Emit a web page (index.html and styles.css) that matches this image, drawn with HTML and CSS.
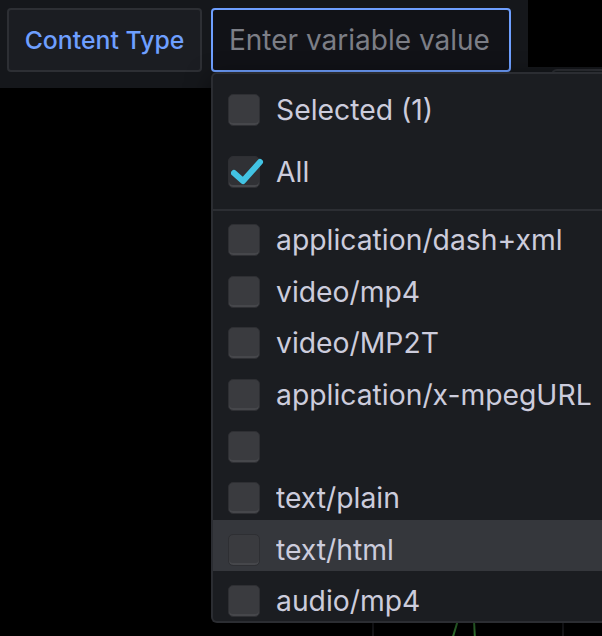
FILE: index.html
```html
<!DOCTYPE html>
<html lang="en">
<head>
  <meta charset="UTF-8">
  <title>Content Type variable</title>
  <link rel="stylesheet" href="styles.css">
</head>
<body>
  <!-- variable bar -->
  <div class="top">
    <div class="controls">
      <label class="var-label" for="var-input">Content Type</label>
      <input class="var-input" id="var-input" type="text" placeholder="Enter variable value">
    </div>
    <div class="aside">
      <div class="aside-black"></div>
      <div class="aside-panel"></div>
    </div>
  </div>

  <!-- panel behind the menu -->
  <div class="chart">
    <svg width="602" height="548" viewBox="0 0 602 548">
      <line x1="373" y1="0" x2="373" y2="548" stroke="#1c1d21" stroke-width="2"/>
      <line x1="563" y1="0" x2="563" y2="548" stroke="#1c1d21" stroke-width="2"/>
      <path d="M452 552 L458 532" stroke="#3b8a3a" stroke-width="2" fill="none"/>
      <path d="M474 532 L475 552" stroke="#3b8a3a" stroke-width="2" fill="none"/>
    </svg>
  </div>

  <!-- options menu -->
  <div class="dropdown">
    <div class="dd-head">
      <div class="opt">
        <span class="box"></span>
        <span class="opt-text">Selected (1)</span>
      </div>
      <div class="opt opt-all">
        <span class="box checked">
          <svg class="tick" width="34" height="30" viewBox="0 0 34 30">
            <path d="M3 18 L12 26 L29 7" stroke="#42c3e3" stroke-width="6" fill="none" stroke-linecap="round" stroke-linejoin="round"/>
          </svg>
        </span>
        <span class="opt-text">All</span>
      </div>
    </div>
    <div class="dd-divider"></div>
    <div class="dd-list">
      <div class="opt"><span class="box"></span><span class="opt-text">application/dash+xml</span></div>
      <div class="opt"><span class="box"></span><span class="opt-text">video/mp4</span></div>
      <div class="opt"><span class="box"></span><span class="opt-text">video/MP2T</span></div>
      <div class="opt"><span class="box"></span><span class="opt-text">application/x-mpegURL</span></div>
      <div class="opt"><span class="box"></span><span class="opt-text"></span></div>
      <div class="opt"><span class="box"></span><span class="opt-text">text/plain</span></div>
      <div class="opt hover"><span class="box"></span><span class="opt-text">text/html</span></div>
      <div class="opt"><span class="box"></span><span class="opt-text">audio/mp4</span></div>
    </div>
  </div>
</body>
</html>
```

FILE: styles.css
```css
body {
  margin: 0;
  background: #000;
  font-family: Inter, "Noto Sans", sans-serif;
  position: relative;
  width: 602px;
  height: 636px;
  overflow: hidden;
}

/* variable bar */
.top {
  display: flex;
  height: 88px;
  background: #15171b;
}
.controls {
  width: 528px;
  display: flex;
  gap: 9px;
  padding: 8px 0 0 7px;
  box-sizing: border-box;
}
.var-label {
  width: 195px;
  height: 64px;
  box-sizing: border-box;
  display: flex;
  align-items: center;
  justify-content: center;
  background: #1b1d22;
  border: 2px solid #2d2f34;
  border-radius: 4px;
  color: #6e9fff;
  font-size: 24.8px;
  font-weight: 500;
}
.var-input {
  width: 300px;
  height: 64px;
  box-sizing: border-box;
  background: #111217;
  border: 2px solid #6e9fff;
  border-radius: 4px;
  padding: 0 16px;
  font-family: inherit;
  font-size: 28px;
  color: #ccccdc;
  outline: none;
}
.var-input::placeholder {
  color: #7c7e86;
}
.aside {
  flex: 1;
  display: flex;
  flex-direction: column;
}
.aside-black {
  height: 67px;
  background: #000;
}
.aside-panel {
  flex: 1;
  margin-left: 23px;
  margin-top: 2px;
  border-top: 2px solid #2c2e33;
  border-left: 2px solid #2c2e33;
  border-radius: 6px 0 0 0;
  background: #181b1f;
}

.chart svg {
  display: block;
}

/* options menu, cut off by the right edge */
.dropdown {
  position: absolute;
  left: 211px;
  top: 72px;
  width: 391px;
  box-sizing: border-box;
  background: #1b1d21;
  border: 2px solid #2b2d32;
  border-right: none;
  border-radius: 6px 0 0 6px;
  overflow: hidden;
  box-shadow: 0 8px 24px rgba(0, 0, 0, 0.6);
}
.dd-head {
  padding: 6.7px 0 15px;
}
.opt-all {
  margin-top: 9.7px;
}
.dd-divider {
  height: 2px;
  background: #2c2e33;
}
.dd-list {
  max-height: 410px;
  overflow: hidden;
}
.opt {
  height: 51.57px;
  box-sizing: border-box;
  padding: 8px 0 0 15px;
  display: flex;
  align-items: center;
  gap: 16px;
}
.opt.hover {
  background: #35373c;
}
.box {
  position: relative;
  flex: none;
  width: 32px;
  height: 32px;
  box-sizing: border-box;
  background: #3a3b3f;
  border: 1px solid #2e2f33;
  border-radius: 5px;
  box-shadow: inset 0 -2px 0 #46474b;
}
.box.checked {
  background: #303135;
}
.tick {
  position: absolute;
  left: 2px;
  top: -2px;
}
.opt-text {
  color: #ccccdc;
  font-size: 28.3px;
  white-space: nowrap;
  overflow: hidden;
}
```
